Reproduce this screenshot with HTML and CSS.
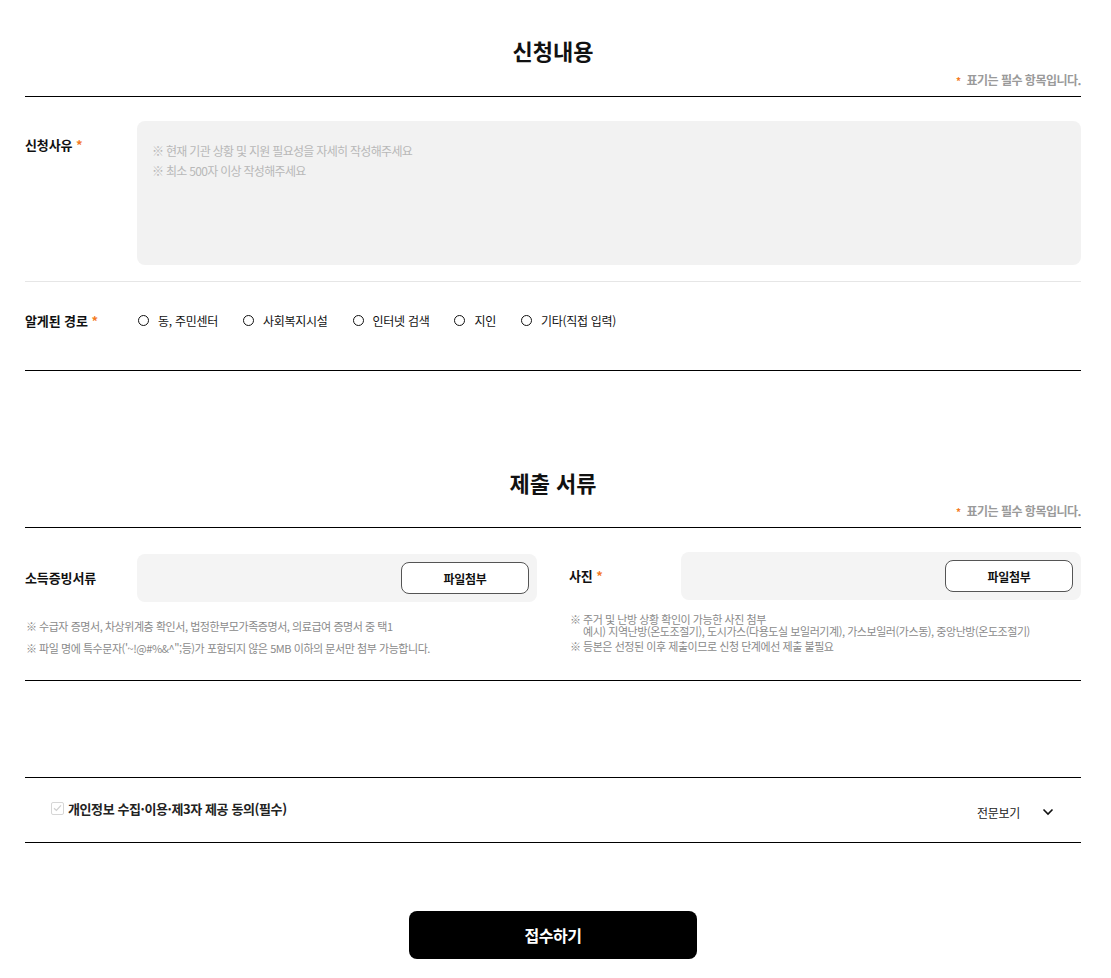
FILE: index.html
```html
<!DOCTYPE html>
<html lang="ko">
<head>
<meta charset="utf-8">
<title>신청내용</title>
<link rel="stylesheet" href="styles.css">
</head>
<body>
<div class="page">
  <section class="section">
    <h2 class="title">신청내용</h2>
    <p class="req-note"><span class="star">*</span>표기는 필수 항목입니다.</p>
    <div class="row row-reason">
      <div class="label">신청사유 <span class="star">*</span></div>
      <div class="textarea">
        <p>※ 현재 기관 상황 및 지원 필요성을 자세히 작성해주세요</p>
        <p>※ 최소 500자 이상 작성해주세요</p>
      </div>
    </div>
    <div class="row row-route">
      <div class="label">알게된 경로 <span class="star">*</span></div>
      <div class="radios">
        <label class="radio"><span class="circle"></span>동, 주민센터</label>
        <label class="radio"><span class="circle"></span>사회복지시설</label>
        <label class="radio"><span class="circle"></span>인터넷 검색</label>
        <label class="radio"><span class="circle"></span>지인</label>
        <label class="radio"><span class="circle"></span>기타(직접 입력)</label>
      </div>
    </div>
  </section>

  <section class="section section-docs">
    <h2 class="title">제출 서류</h2>
    <p class="req-note"><span class="star">*</span>표기는 필수 항목입니다.</p>
    <div class="row row-files">
      <div class="file-col">
        <div class="file-line">
          <div class="label">소득증빙서류</div>
          <div class="file-box"><button class="file-btn" type="button">파일첨부</button></div>
        </div>
        <ul class="notes">
          <li><span class="mark">※</span><span>수급자 증명서, 차상위계층 확인서, 법정한부모가족증명서, 의료급여 증명서 중 택1</span></li>
          <li><span class="mark">※</span><span>파일 명에 특수문자('~!@#%&amp;^";등)가 포함되지 않은 5MB 이하의 문서만 첨부 가능합니다.</span></li>
        </ul>
      </div>
      <div class="file-col file-col-right">
        <div class="file-line">
          <div class="label">사진 <span class="star">*</span></div>
          <div class="file-box"><button class="file-btn" type="button">파일첨부</button></div>
        </div>
        <ul class="notes notes-tight">
          <li><span class="mark">※</span><span class="note-lines"><span class="note-line">주거 및 난방 상황 확인이 가능한 사진 첨부</span><span class="note-line">예시) 지역난방(온도조절기), 도시가스(다용도실 보일러기계), 가스보일러(가스동), 중앙난방(온도조절기)</span></span></li>
          <li><span class="mark">※</span><span>등본은 선정된 이후 제출이므로 신청 단계에선 제출 불필요</span></li>
        </ul>
      </div>
    </div>
  </section>

  <div class="agree">
    <label class="agree-check">
      <span class="checkbox"><svg width="9" height="8" viewBox="0 0 9 8"><path d="M1 4.2 L3.4 6.5 L8 1.3" fill="none" stroke="#cfcfcf" stroke-width="1.2"/></svg></span>
      개인정보 수집·이용·제3자 제공 동의(필수)
    </label>
    <button class="agree-more" type="button">전문보기
      <svg width="12" height="8" viewBox="0 0 12 8"><path d="M1.5 1.5 L6 6 L10.5 1.5" fill="none" stroke="#111" stroke-width="1.6"/></svg>
    </button>
  </div>

  <div class="submit-wrap">
    <button class="submit" type="button">접수하기</button>
  </div>
</div>
</body>
</html>
```

FILE: styles.css
```css
* { box-sizing: border-box; }
html, body { margin: 0; padding: 0; background: #fff; }
body {
  font-family: "Noto Sans CJK KR", "Noto Sans", sans-serif;
  color: #111;
}
.page {
  padding: 35px 30px 40px 25px;
}
.title {
  margin: 0;
  font-size: 22px;
  line-height: 30px;
  font-weight: 700;
  text-align: center;
  letter-spacing: 0;
}
.req-note {
  margin: 7px 0 0;
  height: 25px;
  text-align: right;
  font-size: 12px;
  line-height: 16px;
  font-weight: 700;
  color: #9a9a9a;
  letter-spacing: -0.5px;
  padding-bottom: 8px;
  border-bottom: 1px solid #000;
  overflow: hidden;
}
.req-note .star { font-size: 10px; line-height: 1; margin-right: 6px; }
.star { color: #f47a25; font-weight: 700; }
.row { display: flex; }
.label {
  width: 112px;
  flex: none;
  font-size: 13px;
  line-height: 20px;
  font-weight: 700;
  letter-spacing: -0.1px;
}
.row-reason {
  padding: 24px 0 16px;
  border-bottom: 1px solid #e6e6e6;
}
.row-reason .label { margin-top: 14px; }
.textarea {
  flex: 1;
  height: 144px;
  background: #f2f2f2;
  border-radius: 8px;
  padding: 20px 15px;
}
.textarea p {
  margin: 0;
  font-size: 12px;
  line-height: 20px;
  color: #b8b8b8;
  letter-spacing: -0.7px;
}
.row-route {
  padding: 29px 0 39px;
  border-bottom: 1px solid #000;
}
.radios { display: flex; align-items: center; margin-left: 1px; }
.radio {
  display: flex;
  align-items: center;
  font-size: 12px;
  line-height: 20px;
  letter-spacing: -0.28px;
  color: #111;
  margin-right: 25px;
}
.circle {
  width: 11px;
  height: 11px;
  border: 1.5px solid #111;
  border-radius: 50%;
  margin-right: 9px;
  margin-top: -1px;
}
.section-docs { margin-top: 96px; }
.section-docs .req-note { margin-top: 6px; }
.row-files {
  gap: 32px;
  align-items: flex-start;
  padding-bottom: 25px;
  border-bottom: 1px solid #000;
}
.file-col { flex: 1; padding-top: 26px; }
.file-col-right { padding-top: 24px; }
.file-line { display: flex; align-items: center; }
.file-box {
  flex: 1;
  height: 48px;
  background: #f4f4f4;
  border-radius: 8px;
  display: flex;
  align-items: center;
  justify-content: flex-end;
  padding-right: 8px;
}
.file-btn {
  width: 128px;
  height: 32px;
  background: #fff;
  border: 1px solid #555;
  border-radius: 8px;
  font-family: inherit;
  font-size: 12px;
  font-weight: 700;
  color: #111;
  letter-spacing: -0.3px;
  padding: 0;
}
.notes {
  list-style: none;
  margin: 17px 0 0;
  padding: 0 0 0 1px;
  display: flex;
  flex-direction: column;
  gap: 8px;
}
.notes li {
  display: flex;
  font-size: 11px;
  line-height: 14px;
  color: #8a8a8a;
  letter-spacing: -0.45px;
}
.mark { width: 13px; flex: none; letter-spacing: 0; }
.notes-tight { margin-top: 13px; gap: 3px; }
.notes-tight li { line-height: 13px; }
.note-lines { display: flex; flex-direction: column; }
.note-line { display: block; height: 12px; line-height: 12px; }
.agree {
  margin-top: 96px;
  border-top: 1px solid #000;
  border-bottom: 1px solid #000;
  height: 66px;
  display: flex;
  align-items: center;
  justify-content: space-between;
  padding: 0 27px 0 26px;
}
.agree-check {
  display: flex;
  align-items: center;
  font-size: 13px;
  font-weight: 700;
  letter-spacing: -0.4px;
  color: #222;
  margin-top: -4px;
}
.checkbox {
  width: 13px;
  height: 13px;
  border: 1px solid #d6d6d6;
  border-radius: 2px;
  display: flex;
  align-items: center;
  justify-content: center;
  margin-right: 4px;
}
.agree-more {
  display: flex;
  align-items: center;
  gap: 22px;
  background: none;
  border: 0;
  padding: 0;
  font-family: inherit;
  font-size: 12px;
  letter-spacing: -0.3px;
  color: #222;
  margin-top: 4px;
}
.submit-wrap { display: flex; justify-content: center; margin-top: 68px; }
.submit {
  width: 288px;
  height: 48px;
  background: #000;
  color: #fff;
  border: 0;
  border-radius: 8px;
  font-family: inherit;
  font-size: 16px;
  font-weight: 700;
  letter-spacing: -0.5px;
}
```
